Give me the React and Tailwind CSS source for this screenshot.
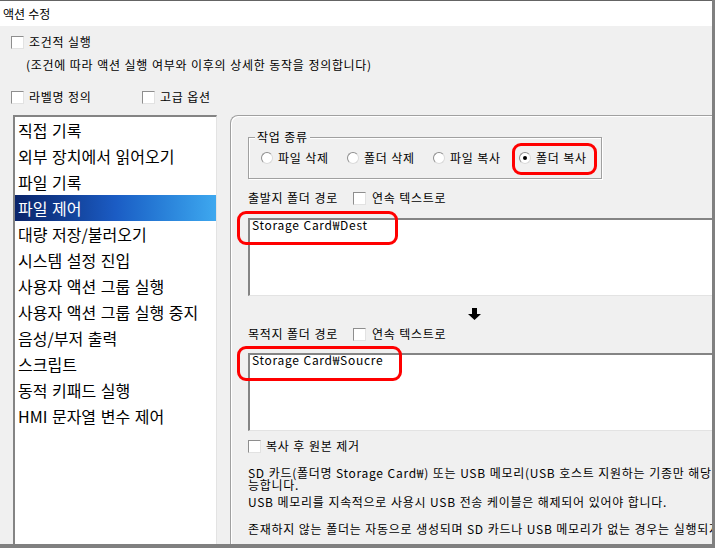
import React from "react";

const items = [
    "직접 기록",
    "외부 장치에서 읽어오기",
    "파일 기록",
    "파일 제어",
    "대량 저장/불러오기",
    "시스템 설정 진입",
    "사용자 액션 그룹 실행",
    "사용자 액션 그룹 실행 중지",
    "음성/부저 출력",
    "스크립트",
    "동적 키패드 실행",
    "HMI 문자열 변수 제어",
];

const radios = ["파일 삭제", "폴더 삭제", "파일 복사", "폴더 복사"];

function CheckBox() {
    return (
        <span className="w-[13px] h-[13px] shrink-0 bg-white border border-t-[#8e8e8e] border-l-[#8e8e8e] border-r-[#e2e2e2] border-b-[#e2e2e2]"/>
    );
}

function Radio({checked}) {
    return (
        <span className="w-[12px] h-[12px] shrink-0 rounded-full bg-white border border-t-[#8e8e8e] border-l-[#8e8e8e] border-r-[#dadada] border-b-[#dadada] flex items-center justify-center">
            {checked && <span className="w-[4px] h-[4px] rounded-full bg-black"/>}
        </span>
    );
}

function DownArrow() {
    return (
        <svg width="13" height="12" viewBox="0 0 13 12">
            <path d="M4 0 H9 V6 H13 L6.5 12 L0 6 H4 Z" fill="#000"/>
        </svg>
    );
}

function PathBox({text}) {
    return (
        <div className="h-[78px] w-[500px] shrink-0 bg-white border-t-2 border-l-2 border-[#848484] border-b border-b-[#e3e3e3] px-[2px] leading-[10px] whitespace-nowrap">
            {text}
        </div>
    );
}

function App() {
    return (
        <div className="relative w-[715px] h-[548px] overflow-hidden bg-[#808080] font-['Noto_Sans_CJK_KR',sans-serif] text-[12px] text-black tracking-[0.7px] [word-spacing:0.5px]">
            <div className="w-[712px] h-[544px] flex flex-col overflow-hidden">
                {/* title */}
                <div className="h-[26px] shrink-0 bg-white border-t border-[#646464] px-[3px] flex items-center tracking-normal">
                    액션 수정
                </div>

                <div className="flex-1 min-h-0 bg-[#f0f0f0] flex flex-col">
                    <div className="mt-[8px] h-[16px] pl-[11px] flex items-center gap-[5px] leading-[16px]">
                        <CheckBox/>
                        <span>조건적 실행</span>
                    </div>
                    <div className="mt-[7px] h-[16px] pl-[26px] flex items-center leading-[16px] whitespace-nowrap">
                        (조건에 따라 액션 실행 여부와 이후의 상세한 동작을 정의합니다)
                    </div>
                    <div className="mt-[16px] h-[16px] pl-[11px] flex items-center leading-[16px]">
                        <div className="w-[131px] flex items-center gap-[5px]">
                            <CheckBox/>
                            <span>라벨명 정의</span>
                        </div>
                        <div className="flex items-center gap-[5px]">
                            <CheckBox/>
                            <span>고급 옵션</span>
                        </div>
                    </div>

                    <div className="mt-[10px] flex-1 min-h-0 flex pl-[13px] gap-[13px]">
                        {/* action list */}
                        <div className="w-[204px] shrink-0 bg-white border-t-2 border-l-2 border-[#848484] border-r border-r-[#e3e3e3] flex flex-col tracking-normal [word-spacing:1px]">
                            {items.map((item, i) => (
                                <div
                                    key={item}
                                    className={i === 3
                                        ? "h-[26px] px-[3px] flex items-center text-[16px] leading-[26px] whitespace-nowrap text-white bg-linear-to-r from-[#0a246a] via-[#1b5cc4] to-[#3ea8ef]"
                                        : "h-[26px] px-[3px] flex items-center text-[16px] leading-[26px] whitespace-nowrap"}
                                >
                                    {item}
                                </div>
                            ))}
                        </div>

                        {/* settings panel */}
                        <div className="w-[520px] shrink-0 border-t border-l border-[#a0a0a0] rounded-tl-[8px] shadow-[inset_1px_1px_0_#fff] pl-[17px] pt-[21px] flex flex-col">
                            <div className="relative w-[354px] h-[42px] shrink-0 border border-[#a0a0a0] shadow-[inset_1px_1px_0_#fff,1px_1px_0_#fff] flex items-center pl-[12px] leading-[16px]">
                                <span className="absolute -top-[9px] left-[6px] px-[2px] bg-[#f0f0f0]">작업 종류</span>
                                {radios.map((r, i) => (
                                    <div key={r} className="w-[86px] shrink-0 flex items-center gap-[5px] whitespace-nowrap">
                                        <Radio checked={i === 3}/>
                                        <span>{r}</span>
                                    </div>
                                ))}
                            </div>

                            <div className="mt-[11px] h-[16px] flex items-center leading-[16px]">
                                <span className="w-[105px] whitespace-nowrap">출발지 폴더 경로</span>
                                <CheckBox/>
                                <span className="ml-[6px]">연속 텍스트로</span>
                            </div>
                            <div className="mt-[12px]">
                                <PathBox text="Storage Card₩Dest"/>
                            </div>

                            <div className="mt-[12px] h-[12px] ml-[220px] flex">
                                <DownArrow/>
                            </div>

                            <div className="mt-[6px] h-[16px] flex items-center leading-[16px]">
                                <span className="w-[105px] whitespace-nowrap">목적지 폴더 경로</span>
                                <CheckBox/>
                                <span className="ml-[6px]">연속 텍스트로</span>
                            </div>
                            <div className="mt-[11px]">
                                <PathBox text="Storage Card₩Soucre"/>
                            </div>

                            <div className="mt-[7px] h-[16px] flex items-center gap-[5px] leading-[16px]">
                                <CheckBox/>
                                <span>복사 후 원본 제거</span>
                            </div>

                            <div className="mt-[13px] leading-[12px] whitespace-nowrap">
                                <div>SD 카드(폴더명 Storage Card₩) 또는 USB 메모리(USB 호스트 지원하는 기종만 해당) 사용 가</div>
                                <div>능합니다.</div>
                                <div className="mt-[5px]">USB 메모리를 지속적으로 사용시 USB 전송 케이블은 해제되어 있어야 합니다.</div>
                                <div className="mt-[15px]">존재하지 않는 폴더는 자동으로 생성되며 SD 카드나 USB 메모리가 없는 경우는 실행되지 않습니다.</div>
                            </div>
                        </div>
                    </div>
                </div>
            </div>

            {/* red annotation marks */}
            <div className="absolute left-[512px] top-[143px] w-[85px] h-[32px] border-[3px] border-[#ff0000] rounded-[9px]"/>
            <div className="absolute left-[237px] top-[211px] w-[161px] h-[34px] border-[3px] border-[#ff0000] rounded-[9px]"/>
            <div className="absolute left-[237px] top-[346px] w-[165px] h-[35px] border-[3px] border-[#ff0000] rounded-[9px]"/>
        </div>
    );
}

export default App;
